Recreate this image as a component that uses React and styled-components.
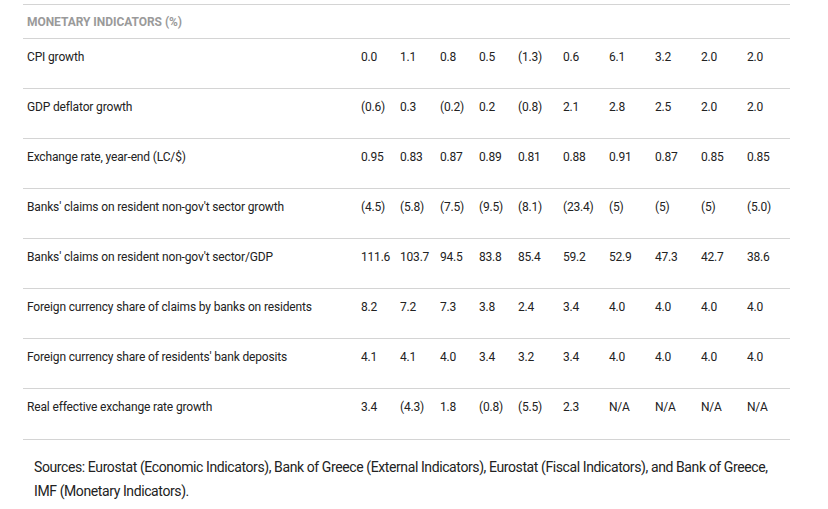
import React from 'react';
import styled, { createGlobalStyle } from 'styled-components';

const GlobalStyle = createGlobalStyle`
  body {
    margin: 0;
    background: #fff;
    font-family: 'Roboto', 'Liberation Sans', sans-serif;
    color: #222;
  }
`;

const rows = [
  ['CPI growth', ['0.0', '1.1', '0.8', '0.5', '(1.3)', '0.6', '6.1', '3.2', '2.0', '2.0']],
  ['GDP deflator growth', ['(0.6)', '0.3', '(0.2)', '0.2', '(0.8)', '2.1', '2.8', '2.5', '2.0', '2.0']],
  ['Exchange rate, year-end (LC/$)', ['0.95', '0.83', '0.87', '0.89', '0.81', '0.88', '0.91', '0.87', '0.85', '0.85']],
  ["Banks' claims on resident non-gov't sector growth", ['(4.5)', '(5.8)', '(7.5)', '(9.5)', '(8.1)', '(23.4)', '(5)', '(5)', '(5)', '(5.0)']],
  ["Banks' claims on resident non-gov't sector/GDP", ['111.6', '103.7', '94.5', '83.8', '85.4', '59.2', '52.9', '47.3', '42.7', '38.6']],
  ['Foreign currency share of claims by banks on residents', ['8.2', '7.2', '7.3', '3.8', '2.4', '3.4', '4.0', '4.0', '4.0', '4.0']],
  ["Foreign currency share of residents' bank deposits", ['4.1', '4.1', '4.0', '3.4', '3.2', '3.4', '4.0', '4.0', '4.0', '4.0']],
  ['Real effective exchange rate growth', ['3.4', '(4.3)', '1.8', '(0.8)', '(5.5)', '2.3', 'N/A', 'N/A', 'N/A', 'N/A']],
];

function App() {
  return (
    <>
      <GlobalStyle />
      <Page>
        <Table>
          <HeadRow>
            <HeadCell>MONETARY INDICATORS (%)</HeadCell>
          </HeadRow>
          {rows.map(([label, values], i) => (
            <Row key={i}>
              <Label>{label}</Label>
              {values.map((v, j) => (
                <Value key={j}>{v}</Value>
              ))}
              <Value />
            </Row>
          ))}
        </Table>
        <Sources>
          Sources: Eurostat (Economic Indicators), Bank of Greece (External Indicators), Eurostat (Fiscal Indicators), and Bank of Greece, IMF (Monetary Indicators).
        </Sources>
      </Page>
    </>
  );
}

export default App;

const Page = styled.div`
  padding: 4px 38px 0 23px;
  width: 767px;
`;

const Table = styled.div`
  border-top: 1px solid #d4d4d4;
  border-bottom: 1px solid #d4d4d4;
`;

const HeadRow = styled.div`
  height: 32px;
  display: flex;
  align-items: center;
  padding-left: 4px;
  padding-top: 1px;
`;

const HeadCell = styled.div`
  font-size: 12px;
  font-weight: 700;
  color: #9a9a9a;
  letter-spacing: -0.05px;
`;

const Row = styled.div`
  display: grid;
  grid-template-columns: 334px 39px 40px 39px 39px 45px 46px 46px 46px 46px 1fr;
  height: 49px;
  border-top: 1px solid #d4d4d4;
  font-size: 12px;
  line-height: 18px;

  &:last-child {
    height: 50px;
  }
`;

const Label = styled.div`
  padding: 9px 0 0 4px;
  letter-spacing: -0.15px;
`;

const Value = styled.div`
  padding: 9px 0 0 4px;
  white-space: nowrap;
  letter-spacing: -0.2px;
`;

const Sources = styled.p`
  margin: 15px 0 0 11px;
  font-size: 14px;
  line-height: 24px;
  letter-spacing: -0.4px;
  color: #222;
`;
